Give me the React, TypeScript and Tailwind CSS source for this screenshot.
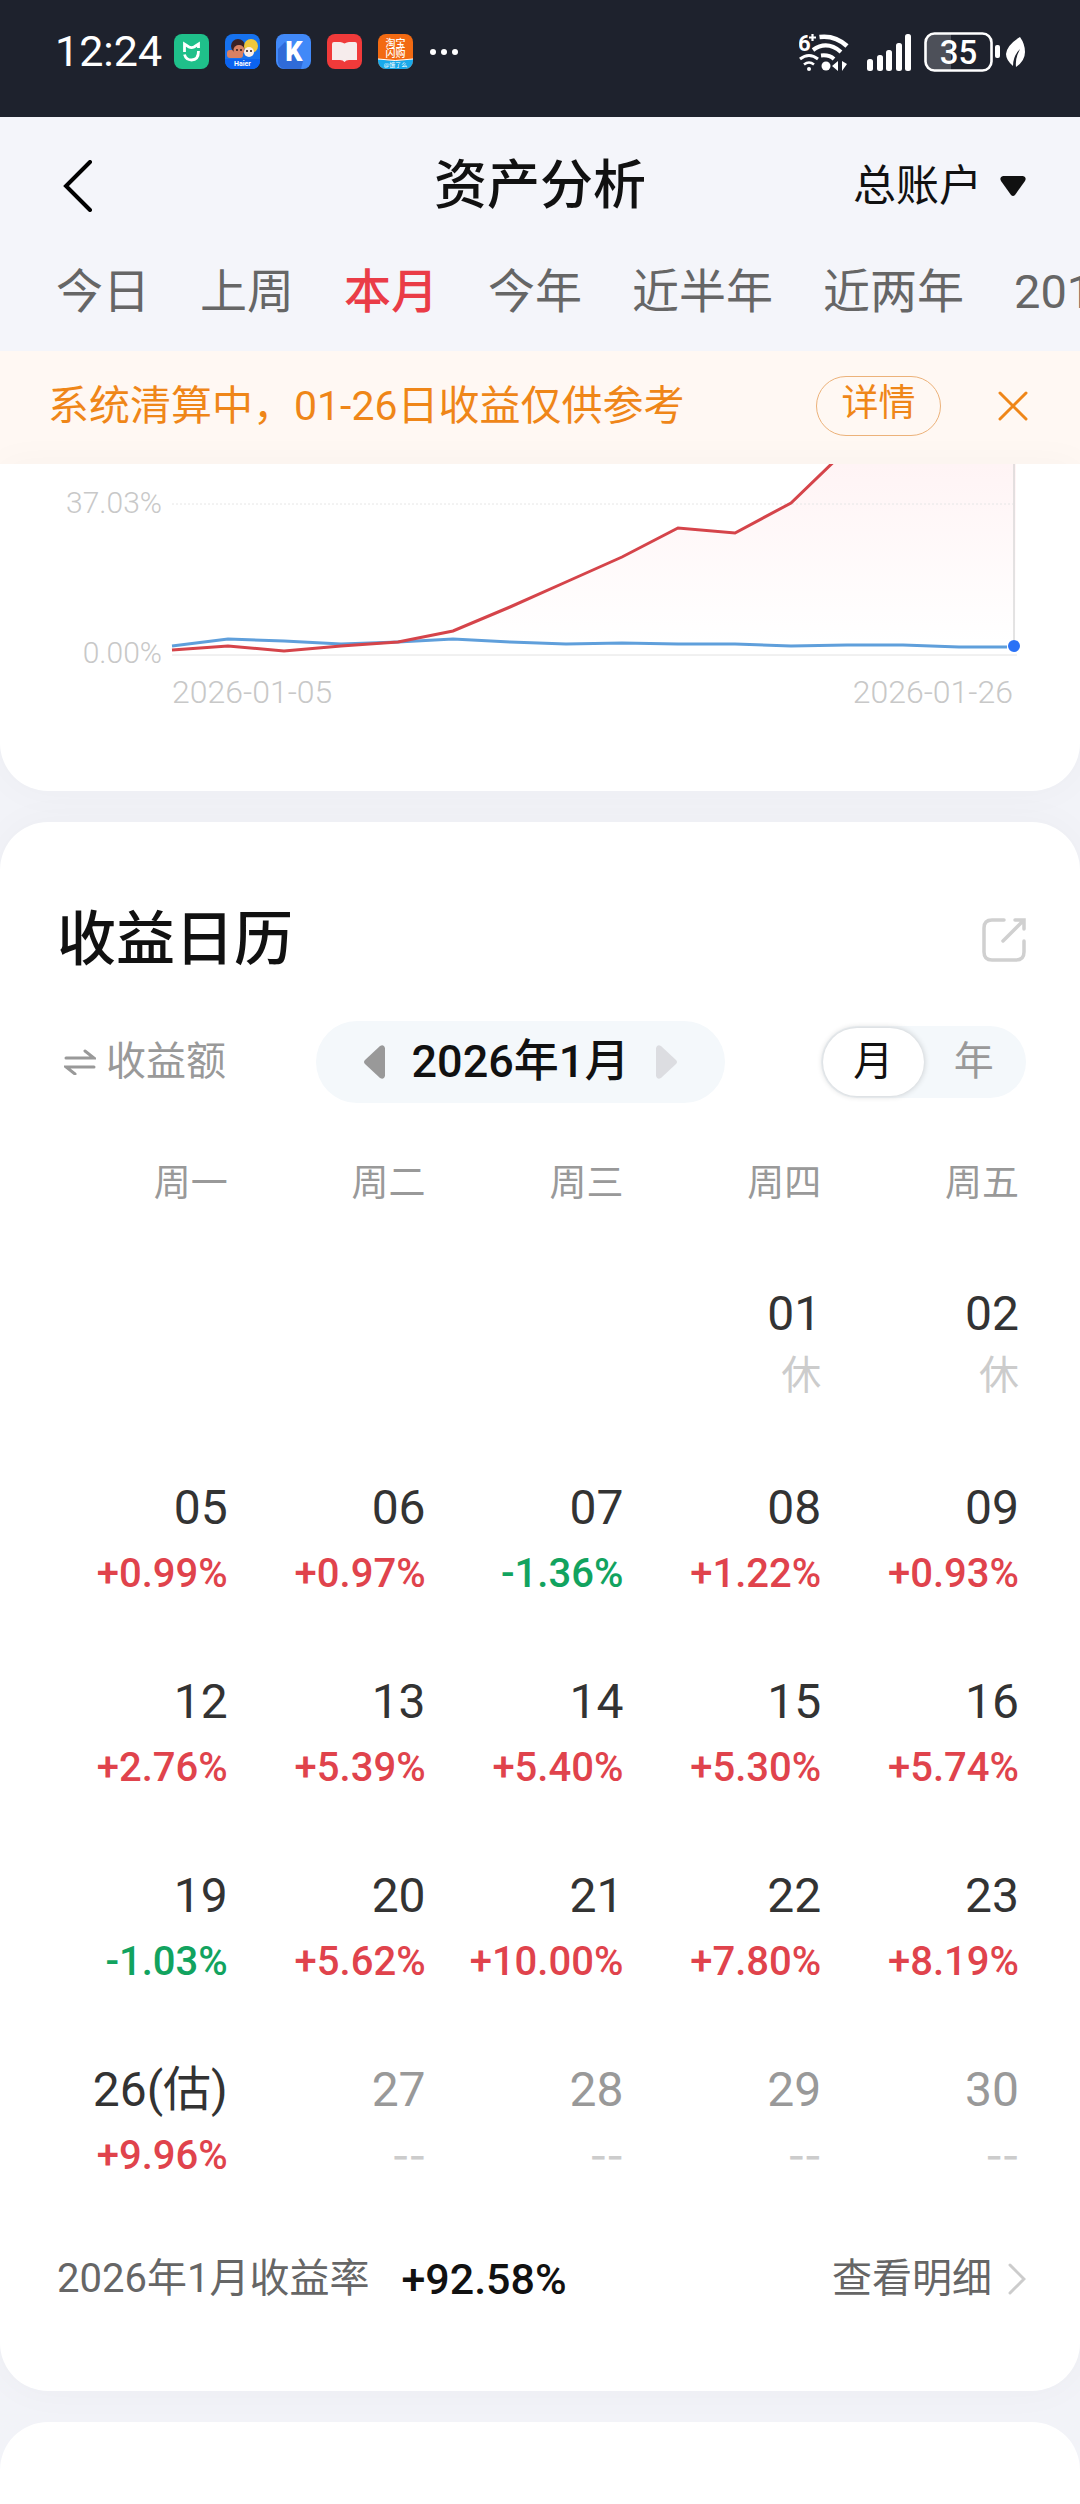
import React, { useState } from 'react';
import clsx from 'clsx';

type Tone = 'up' | 'down' | 'rest' | 'none';

interface DayCell {
  day: string;
  value: string;
  tone: Tone;
  future?: boolean;
}

const PERIODS = ['今日', '上周', '本月', '今年', '近半年', '近两年', '2018年'];
const WEEKDAYS = ['周一', '周二', '周三', '周四', '周五'];

const up = (day: string, value: string): DayCell => ({ day, value, tone: 'up' });
const down = (day: string, value: string): DayCell => ({
  day,
  value,
  tone: 'down',
});
const rest = (day: string): DayCell => ({ day, value: '休', tone: 'rest' });
const future = (day: string): DayCell => ({
  day,
  value: '--',
  tone: 'none',
  future: true,
});

const WEEKS: (DayCell | null)[][] = [
  [null, null, null, rest('01'), rest('02')],
  [
    up('05', '+0.99%'),
    up('06', '+0.97%'),
    down('07', '-1.36%'),
    up('08', '+1.22%'),
    up('09', '+0.93%'),
  ],
  [
    up('12', '+2.76%'),
    up('13', '+5.39%'),
    up('14', '+5.40%'),
    up('15', '+5.30%'),
    up('16', '+5.74%'),
  ],
  [
    down('19', '-1.03%'),
    up('20', '+5.62%'),
    up('21', '+10.00%'),
    up('22', '+7.80%'),
    up('23', '+8.19%'),
  ],
  [
    up('26(估)', '+9.96%'),
    future('27'),
    future('28'),
    future('29'),
    future('30'),
  ],
];

const TONE_CLASS: Record<Tone, string> = {
  up: 'text-[40px] leading-[68px] font-medium text-[#e0434c]',
  down: 'text-[40px] leading-[68px] font-medium text-[#12a35f]',
  rest: 'text-[40px] leading-[60px] text-[#cccccc]',
  none: "font-['Noto_Sans_CJK_SC',sans-serif] text-[48px] leading-[56px] text-[#cccccc]",
};

const ACCOUNT_LINE =
  '172,186 228,182 284,187 341,182 398,178 453,167 510,143 566,118 622,93 678,64 735,69 791,39 847,-15';
const INDEX_LINE =
  '172,182 228,175 284,177 341,180 398,178 453,175 510,178 566,180 622,179 678,180 735,180 791,182 847,181 903,181 959,183 1007,183';

const AppIcons: React.FC = () => (
  <div className="flex items-center gap-4">
    <svg viewBox="0 0 35 35" className="size-[35px]">
      <rect width="35" height="35" rx="8" fill="#1fc08a" />
      <path
        d="M10.5 18V10l4.5 3q2.500 1.200 5 0l4.500-3v4M10.500 20.500q1.500 5.500 7 5.500 7 0 7-9"
        fill="none"
        stroke="#fff"
        strokeWidth="2.800"
      />
    </svg>
    <svg viewBox="0 0 35 35" className="size-[35px]">
      <rect width="35" height="35" rx="8" fill="#1672ee" />
      <rect x="2" y="16" width="16" height="8" rx="3" fill="#d98163" />
      <circle cx="13" cy="12" r="7" fill="#3b2226" />
      <ellipse cx="14" cy="16" rx="5.500" ry="5" fill="#d98163" />
      <circle cx="26" cy="12" r="7" fill="#f0c83c" />
      <ellipse cx="24" cy="18" rx="5" ry="5" fill="#fbeee6" />
      <circle cx="12" cy="16" r="1" fill="#2a1a1d" />
      <circle cx="16" cy="16" r="1" fill="#2a1a1d" />
      <circle cx="22" cy="17" r="1" fill="#2a1a1d" />
      <circle cx="26" cy="17" r="1" fill="#2a1a1d" />
      <path d="M0 25h35v2a8 8 0 0 1-8 8H8a8 8 0 0 1-8-8z" fill="#0b63f0" />
      <text
        x="17.500"
        y="32"
        textAnchor="middle"
        fontSize="7"
        fontWeight="700"
        fill="#fff"
      >
        Haier
      </text>
    </svg>
    <svg viewBox="0 0 35 35" className="size-[35px]">
      <rect width="35" height="35" rx="8" fill="#4189f8" />
      <path d="M9 8L2 15v14q2 6 8 6h15l2-8z" fill="#2f6bd8" />
      <text
        x="18"
        y="27"
        textAnchor="middle"
        fontSize="27"
        fontWeight="900"
        fill="#fff"
      >
        K
      </text>
    </svg>
    <svg viewBox="0 0 35 35" className="size-[35px]">
      <rect width="35" height="35" rx="8" fill="#f03a3a" />
      <path
        d="M5 10q0-2 2-2h6q2 0 4.500 1.500Q20 8 22 8h6q2 0 2 2v16h-8q-3 0-4.500 2-1.500-2-4.500-2H5z"
        fill="#f6ecec"
      />
    </svg>
    <svg viewBox="0 0 35 35" className="size-[35px]">
      <rect width="35" height="35" rx="8" fill="#f26a12" />
      <path d="M0 25q17 3 35 0v2a8 8 0 0 1-8 8H8a8 8 0 0 1-8-8z" fill="#19a9ea" />
      <path d="M0 25q17 3 35 0" fill="none" stroke="#fff" />
      <g fill="#fff" textAnchor="middle">
        <text x="17.500" y="13" fontSize="10" fontWeight="500">
          淘宝
        </text>
        <text x="17.500" y="23" fontSize="10" fontWeight="500">
          闪购
        </text>
        <text x="17.500" y="33" fontSize="6">
          @饿了么
        </text>
      </g>
    </svg>
    <svg viewBox="0 0 30 8" className="h-2 w-[30px] fill-white">
      <circle cx="4" cy="4" r="3" />
      <circle cx="15" cy="4" r="3" />
      <circle cx="26" cy="4" r="3" />
    </svg>
  </div>
);

const SystemIcons: React.FC = () => (
  <div className="flex items-center">
    <svg viewBox="0 0 50 38" className="h-[38px] w-[50px]" fill="none" stroke="#fff">
      <text x="-1" y="18" fontSize="22" fontWeight="700" fill="#fff" stroke="none">
        6
      </text>
      <path d="M13.500 1v7M10 4.500h7" strokeWidth="2.200" />
      <path d="M20.500 4Q36 2 48 13" strokeWidth="4.600" />
      <path d="M14 17Q28 7 42 19" strokeWidth="4.200" />
      <path d="M22 22.500q8-1 13 3.500" strokeWidth="4" />
      <path d="M1 26q9-7 18 0" strokeWidth="3" />
      <path d="M5 31.500q5-4 10 0" strokeWidth="2.600" />
      <circle cx="10" cy="36" r="2" fill="#fff" stroke="none" />
      <circle cx="27" cy="33" r="4.500" fill="#fff" stroke="none" />
      <path d="M39 28v10l-6-5zM43 28v10l5-7z" fill="#fff" stroke="none" />
    </svg>
    <svg viewBox="0 0 46 38" className="ml-[18px] h-[38px] w-[46px] fill-white">
      <rect x="0" y="26" width="6" height="12" rx="2.500" />
      <rect x="10" y="22" width="6" height="16" rx="2.500" />
      <rect x="19" y="17" width="6" height="21" rx="2.500" />
      <rect x="29" y="10" width="6" height="28" rx="2.500" />
      <rect x="38" y="1" width="6" height="37" rx="2.500" />
    </svg>
    <svg viewBox="0 0 78 40" className="ml-[11px] h-10 w-[78px]">
      <path d="M11 2h16v36H11a9 9 0 0 1-9-9V11a9 9 0 0 1 9-9z" fill="#4d5059" />
      <rect
        x="1.500"
        y="1.500"
        width="66"
        height="37"
        rx="9"
        fill="none"
        stroke="#fff"
        strokeWidth="2.600"
      />
      <text
        x="34.500"
        y="32"
        textAnchor="middle"
        fontSize="33"
        fontWeight="500"
        fill="#fff"
      >
        35
      </text>
      <rect x="71" y="13" width="5" height="13" rx="2" fill="#fff" />
    </svg>
    <svg viewBox="0 0 20 30" className="ml-1 h-[30px] w-5">
      <path
        d="M14 0q5 7 5 15 0 9-9 15-1-9 4-18-7 7-7 17Q0 23 0 17 1 8 14 0z"
        fill="#fff"
      />
    </svg>
  </div>
);

const YieldChart: React.FC = () => (
  <svg viewBox="0 0 1080 256" className="block h-auto w-full">
    <defs>
      <linearGradient
        id="yieldFill"
        gradientUnits="userSpaceOnUse"
        x1="0"
        y1="0"
        x2="0"
        y2="180"
      >
        <stop offset="0" stopColor="#fff4f5" />
        <stop offset="1" stopColor="#ffffff" />
      </linearGradient>
    </defs>
    <polygon
      points={`${ACCOUNT_LINE} 1016,-15 1016,182 172,190`}
      fill="url(#yieldFill)"
    />
    <line x1="172" y1="40" x2="1013" y2="40" stroke="#e6e6e6" strokeDasharray="2 2" />
    <line x1="172" y1="191" x2="1017" y2="191" stroke="#e2e2e2" />
    <line x1="1014" y1="0" x2="1014" y2="176" stroke="#c8c8c8" />
    <polyline points={INDEX_LINE} fill="none" stroke="#5f9fdb" strokeWidth="3" />
    <polyline points={ACCOUNT_LINE} fill="none" stroke="#d5444a" strokeWidth="3" />
    <circle cx="1014" cy="182" r="6" fill="#2a72f6" />
    <g fill="#c8c8c8" fontWeight="300">
      <text x="162" y="49" textAnchor="end" fontSize="30">
        37.03%
      </text>
      <text x="162" y="199" textAnchor="end" fontSize="30">
        0.00%
      </text>
      <text x="172" y="239" fontSize="32">
        2026-01-05
      </text>
      <text x="1013" y="239" textAnchor="end" fontSize="32">
        2026-01-26
      </text>
    </g>
  </svg>
);

const App: React.FC = () => {
  const [period, setPeriod] = useState('本月');
  const [view, setView] = useState<'月' | '年'>('月');
  const [noticeOpen, setNoticeOpen] = useState(true);

  return (
    <div className="overflow-hidden bg-[#f2f3f8] font-['Roboto','Noto_Sans_CJK_SC',sans-serif] text-[#111111]">
      <div className="flex h-[117px] items-center justify-between bg-[#1e222d] pr-[54px] pb-[14px] pl-[55px] text-white">
        <div className="flex items-center gap-3">
          <span className="text-[43px] leading-none">12:24</span>
          <AppIcons />
        </div>
        <SystemIcons />
      </div>

      <header className="bg-[#f4f5fa] pb-[18px]">
        <div className="grid h-[134px] grid-cols-3 items-center px-[54px] pt-1">
          <button type="button" aria-label="返回" className="justify-self-start px-2">
            <svg viewBox="0 0 32 52" className="h-[52px] w-8">
              <path
                d="M28 2L4 26l24 24"
                fill="none"
                stroke="#000"
                strokeWidth="4"
                strokeLinecap="round"
              />
            </svg>
          </button>
          <h1 className="justify-self-center text-[53px] leading-[64px] font-medium whitespace-nowrap">
            资产分析
          </h1>
          <label className="flex items-center gap-[18px] justify-self-end">
            <select
              aria-label="账户"
              className="appearance-none bg-transparent text-[43px] leading-[56px] outline-none"
            >
              <option>总账户</option>
            </select>
            <svg viewBox="0 0 26 20" className="h-5 w-[26px]">
              <path
                d="M3 0h20q4 1 2 5L15 19q-2 2-4 0L1 5Q-1 1 3 0z"
                fill="#111"
              />
            </svg>
          </label>
        </div>
        <nav className="flex h-[82px] items-center gap-[50px] overflow-hidden pl-14">
          {PERIODS.map((item) => (
            <button
              key={item}
              type="button"
              onClick={() => setPeriod(item)}
              className={clsx(
                'shrink-0 text-[47px] leading-[64px] whitespace-nowrap',
                item === period ? 'font-medium text-[#ea3c47]' : 'text-[#666666]'
              )}
            >
              {item}
            </button>
          ))}
        </nav>
      </header>

      {noticeOpen && (
        <div className="flex h-[113px] items-center bg-[#fff8f3] pr-[50px] pb-1 pl-12 text-[#ef8618]">
          <p className="flex-1 text-[41px] leading-[56px] whitespace-nowrap">
            系统清算中，01-26日收益仅供参考
          </p>
          <button
            type="button"
            className="flex h-[60px] w-[125px] justify-center rounded-full border border-[#ecb27a] text-[37px] leading-[54px]"
          >
            详情
          </button>
          <button
            type="button"
            aria-label="关闭"
            onClick={() => setNoticeOpen(false)}
            className="ml-[55px]"
          >
            <svg viewBox="0 0 34 34" className="size-[34px]">
              <path
                d="M4 4l26 26M30 4L4 30"
                stroke="currentColor"
                strokeWidth="3"
                strokeLinecap="round"
              />
            </svg>
          </button>
        </div>
      )}

      <section className="rounded-b-[48px] bg-white pb-[71px] shadow-[0_0_40px_rgba(0,0,0,0.03)]">
        <YieldChart />
      </section>

      <section className="mt-[31px] rounded-[48px] bg-white pt-[78px] pb-[85px] shadow-[0_0_40px_rgba(0,0,0,0.03)]">
        <div className="flex h-20 items-center justify-between pr-[54px] pl-[57px]">
          <h2 className="text-[59px] leading-[80px] font-medium">收益日历</h2>
          <button type="button" aria-label="分享">
            <svg
              viewBox="0 0 44 44"
              className="size-11"
              fill="none"
              stroke="#d0d0d0"
              strokeWidth="3.500"
              strokeLinecap="round"
            >
              <path d="M22 2H10q-8 0-8 8v24q0 8 8 8h24q8 0 8-8V23" />
              <path d="M33 2h9v9M42 2L21 23" />
            </svg>
          </button>
        </div>

        <div className="mt-[41px] flex items-center pr-[54px] pl-16">
          <button
            type="button"
            className="flex items-center gap-[10px] text-[40px] leading-[56px] text-[#999999]"
          >
            <svg
              viewBox="0 0 32 26"
              className="h-[26px] w-8"
              fill="none"
              stroke="currentColor"
              strokeWidth="3"
              strokeLinecap="round"
            >
              <path d="M2 9h28L21 2M30 18H2l9 7" />
            </svg>
            收益额
          </button>
          <div className="ml-[90px] flex h-[82px] w-[409px] items-center justify-between rounded-full bg-[#f4f8fb] px-12">
            <button type="button" aria-label="上个月">
              <svg viewBox="0 0 21 34" className="h-[34px] w-[21px]">
                <path d="M21 3v28q-1 4-5 2L1 19q-2-2 0-4L16 1q4-2 5 2z" fill="#999" />
              </svg>
            </button>
            <span className="text-[45px] leading-[60px] font-medium">2026年1月</span>
            <button type="button" aria-label="下个月">
              <svg viewBox="0 0 21 34" className="h-[34px] w-[21px]">
                <path d="M0 3v28q1 4 5 2l15-14q2-2 0-4L5 1Q1-1 0 3z" fill="#dcdde1" />
              </svg>
            </button>
          </div>
          <div className="ml-auto flex h-[72px] w-[205px] items-center rounded-full bg-[#f4f8fb] p-[2px]">
            {(['月', '年'] as const).map((item) => (
              <button
                key={item}
                type="button"
                aria-pressed={item === view}
                onClick={() => setView(item)}
                className={clsx(
                  'h-[68px] flex-1 rounded-full text-[40px] leading-[60px]',
                  item === view
                    ? 'bg-white text-[#111111] shadow-[0_0_6px_rgba(0,0,0,0.2)]'
                    : 'text-[#999999]'
                )}
              >
                {item}
              </button>
            ))}
          </div>
        </div>

        <div className="mt-[53px] pr-[61px] pl-[30px]">
          <table className="w-full table-fixed text-right">
            <thead>
              <tr>
                {WEEKDAYS.map((name) => (
                  <th
                    key={name}
                    scope="col"
                    className="pb-[70px] text-[37px] leading-[56px] font-normal text-[#999999]"
                  >
                    {name}
                  </th>
                ))}
              </tr>
            </thead>
            <tbody>
              {WEEKS.map((week, i) => (
                <tr key={i} className="h-[194px] align-top">
                  {week.map((cell, j) => (
                    <td key={j} className="whitespace-nowrap">
                      {cell && (
                        <>
                          <div
                            className={clsx(
                              'text-[48px] leading-[64px]',
                              cell.future ? 'text-[#999999]' : 'text-[#333333]'
                            )}
                          >
                            {cell.day}
                          </div>
                          <div className={TONE_CLASS[cell.tone]}>{cell.value}</div>
                        </>
                      )}
                    </td>
                  ))}
                </tr>
              ))}
            </tbody>
          </table>
        </div>

        <div className="flex h-[54px] items-center justify-between pr-[54px] pl-[57px]">
          <p className="flex items-center gap-8 text-[40px] leading-[54px] text-[#666666]">
            2026年1月收益率
            <strong className="text-[43px] font-medium text-[#111111]">+92.58%</strong>
          </p>
          <a
            href="#detail"
            className="flex items-center gap-4 text-[40px] leading-[54px] text-[#666666]"
          >
            查看明细
            <svg viewBox="0 0 18 32" className="h-8 w-[18px]">
              <path
                d="M2 2l14 14L2 30"
                fill="none"
                stroke="#ccc"
                strokeWidth="3"
                strokeLinecap="round"
              />
            </svg>
          </a>
        </div>
      </section>

      <section className="mt-[31px] h-[82px] rounded-t-[48px] bg-white" />
    </div>
  );
};

export default App;
